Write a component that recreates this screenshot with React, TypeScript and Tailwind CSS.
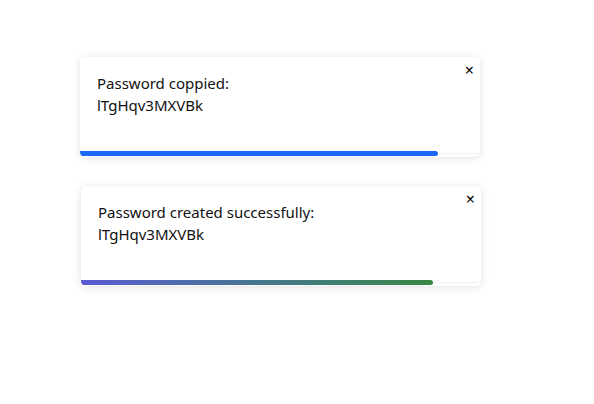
export default function App() {
  return (
    <div className="min-h-screen bg-white pt-[57px] pl-[80px]" style={{ fontFamily: '"Noto Sans", "Open Sans", sans-serif' }}>
      <div className="flex flex-col gap-[29px]">
        <Toast title="Password coppied:" value="lTgHqv3MXVBk" width="89.5%" bar="bg-[#1a66f5]" />
        <Toast title="Password created successfully:" value="lTgHqv3MXVBk" width="88%" bar="bg-gradient-to-r from-[#5a58d2] to-[#39863f]" shift />
      </div>
    </div>
  )
}

function Toast({ title, value, width, bar, shift }: { title: string; value: string; width: string; bar: string; shift?: boolean }) {
  return (
    <div className={`relative flex h-[100px] w-[400px] flex-col overflow-hidden rounded-[5px] bg-white shadow-[0_1px_8px_rgba(0,0,0,0.12)] ${shift ? "ml-px" : ""}`}>
      <button className="absolute right-[6px] top-[5px] text-[16px] leading-none text-black">×</button>
      <div className="flex-1 px-[17px] pt-[15px] text-[15px] leading-[22px] text-[#111111]">
        <p>{title}</p>
        <p>{value}</p>
      </div>
      <div className="relative mb-px h-[5px] w-full">
        <div className="absolute inset-x-0 top-[2px] border-t border-dotted border-[#e6e6e6]" />
        <div className={`relative h-full rounded-r-full ${bar}`} style={{ width }} />
      </div>
    </div>
  )
}
